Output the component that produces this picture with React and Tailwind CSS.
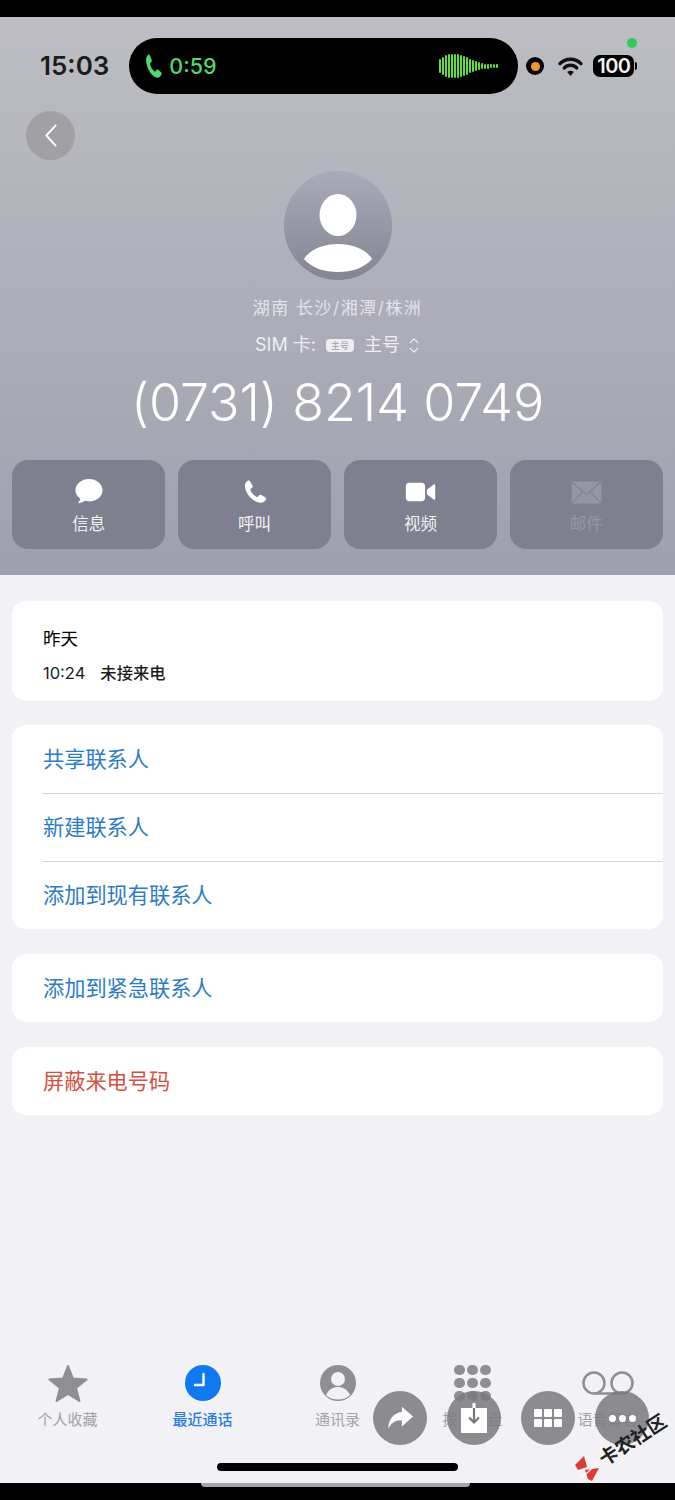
import React from "react";

const font = { fontFamily: '"Inter","Noto Sans CJK SC",sans-serif' };

function Phone({ className = "", fill = "currentColor", stretch }) {
  return (
    <svg viewBox="0 0 24 24" className={className} preserveAspectRatio={stretch ? "none" : undefined}>
      <path fill={fill} d="M5.2 1.6c.9-.5 1.9-.2 2.4.7l2 3.6c.4.8.3 1.6-.4 2.2l-1.3 1.1c-.3.3-.4.6-.2 1 1.2 2.7 3.2 5 5.9 6.3.4.2.7.1 1-.2l1.2-1.2c.6-.6 1.4-.7 2.1-.3l3.5 2.1c.9.5 1.100 1.500.6 2.300-1 1.700-2.800 3-4.800 2.800C9.700 21.300 3.500 14 2.600 6.800c-.2-2.200 1-4.100 2.600-5.200z" />
    </svg>
  );
}

function ActionButton({ label, dim, children }) {
  return (
    <div className="flex h-[89px] flex-1 flex-col items-center rounded-[16px] bg-[#7f808f] pt-[16px]">
      <div className={`flex h-[32px] items-center justify-center ${dim ? "text-[#9496a6]" : "text-white"}`}>{children}</div>
      <div className={`mt-[4px] text-[16.500px] leading-[24px] ${dim ? "text-[#9496a6]" : "text-[#f1f1f4]"}`}>{label}</div>
    </div>
  );
}

function Row({ children, color = "text-[#2a7cc8]", divider, short, flush }) {
  return (
    <div className="pl-[31px]">
      <div className={`flex ${short ? "h-[67px]" : "h-[68px]"} items-center ${flush ? "" : "pt-[2px]"} text-[21.200px] ${color} ${divider ? "border-b border-[#d4d4d8]" : ""}`}>{children}</div>
    </div>
  );
}

function Card({ children, className = "" }) {
  return <div className={`rounded-[14px] bg-white ${className}`}>{children}</div>;
}

function Tab({ label, active, children }) {
  return (
    <div className="flex w-[135px] flex-col items-center">
      <div className="flex h-[38px] items-center justify-center">{children}</div>
      <div className={`mt-[6px] text-[15px] leading-[24px] ${active ? "font-medium text-[#2b7de0]" : "text-[#a3a3a8]"}`}>{label}</div>
    </div>
  );
}

function Wave() {
  const bars = [14, 18, 22, 24, 24, 24, 24, 22, 20, 18, 14, 12, 10, 8, 6, 5, 5, 4, 4, 4];
  return (
    <div className="flex items-center gap-[1px]">
      {bars.map((h, i) => (
        <div key={i} className="w-[2px] rounded-full bg-[#5fe13a]" style={{ height: h }} />
      ))}
    </div>
  );
}

function FloatCircle({ children }) {
  return <div className="flex h-[54px] w-[54px] items-center justify-center rounded-full bg-[#7a7a7e]/85">{children}</div>;
}

export default function App() {
  return (
    <div className="relative flex h-[1500px] w-[675px] flex-col overflow-hidden bg-black" style={font}>
      <div className="h-[17px] shrink-0 bg-black" />

      <div className="h-[558px] shrink-0 bg-gradient-to-b from-[#bdbdc3] to-[#9ea0ae] px-[12px]">
        <div className="relative flex h-[94px] items-start">
          <div className="ml-[28px] mt-[33px] text-[26px] font-semibold leading-[32px] text-[#1c1c1e]">15:03</div>
          <div className="ml-[20px] mt-[21px] flex h-[56px] w-[389px] items-center rounded-[28px] bg-black pl-[15px] pr-[20px]">
            <Phone className="h-[27px] w-[19px]" fill="#4fd96a" stretch />
            <span className="ml-[6px] text-[21.500px] font-medium text-[#4fd96a]">0:59</span>
            <div className="ml-auto"><Wave /></div>
          </div>
          <div className="ml-[8px] mt-[40px] flex h-[18px] w-[18px] items-center justify-center rounded-full bg-black">
            <div className="h-[9px] w-[9px] rounded-full bg-[#f0962b]" />
          </div>
          <svg viewBox="0 0 28 22" className="ml-[13px] mt-[39px] h-[21px] w-[27px]">
            <path d="M3 8a15.500 15.500 0 0 1 22 0M7.500 12.500a9 9 0 0 1 13 0" fill="none" stroke="#111" strokeWidth="3.600" strokeLinecap="round" />
            <path d="M14 21l-3.500-4.200a5 5 0 0 1 7 0z" fill="#111" />
          </svg>
          <div className="ml-[9px] mt-[38px] flex h-[22px] w-[41px] items-center justify-center rounded-[7px] bg-black text-[20px] font-semibold tracking-[-0.500px] text-[#f2f2f2]">100</div>
          <div className="ml-[1px] mt-[45px] h-[8px] w-[2px] rounded-r-full bg-black" />
          <div className="absolute left-[615px] top-[21px] h-[10px] w-[10px] rounded-full bg-[#34c759]" />
        </div>

        <div className="ml-[14px] flex h-[49px] w-[49px] items-center justify-center rounded-full bg-[#a0a0a5]">
          <svg viewBox="0 0 20 32" className="h-[25px] w-[16px]">
            <path d="M16 3L4 16l12 13" fill="none" stroke="#fff" strokeWidth="2.400" strokeLinecap="round" strokeLinejoin="round" />
          </svg>
        </div>

        <div className="mt-[11px] flex justify-center">
          <div className="relative h-[109px] w-[108px] overflow-hidden rounded-full bg-gradient-to-b from-[#a9abb9] to-[#838592]">
            <svg viewBox="0 0 108 109" className="h-full w-full">
              <ellipse cx="54" cy="44" rx="18.500" ry="21" fill="#fff" />
              <path d="M20 88c6-10 20-15 34-15s28 5 34 15c-8 9-20 13-34 13s-26-4-34-13z" fill="#fff" />
            </svg>
          </div>
        </div>

        <div className="mt-[15px] text-center text-[17px] leading-[26px] tracking-[1.500px] text-[#e2e3e8]">湖南 长沙/湘潭/株洲</div>
        <div className="mt-[11px] flex items-center justify-center text-[18px] leading-[26px] text-[#eeeef2]">
          <span>SIM 卡:</span>
          <span className="ml-[10px] flex h-[13px] w-[28px] items-center justify-center rounded-[4px] bg-[#eeeef2] text-[9px] leading-none text-[#9a9ca8]">主号</span>
          <span className="ml-[10px]">主号</span>
          <svg viewBox="0 0 12 20" className="ml-[8px] h-[19px] w-[12px]">
            <path d="M2 7l4-4 4 4M2 13l4 4 4-4" fill="none" stroke="#eeeef2" strokeWidth="1.400" strokeLinecap="round" strokeLinejoin="round" />
          </svg>
        </div>
        <div className="mt-[15px] text-center text-[52px] font-light leading-[60px] tracking-[-0.100px] text-white">(0731) 8214 0749</div>

        <div className="mt-[27px] flex gap-[12.500px]">
          <ActionButton label="信息">
            <svg viewBox="0 0 32 30" className="h-[28px] w-[30px]">
              <path fill="currentColor" d="M16 1C8 1 1.500 6.300 1.500 13c0 3.700 2 7 5.200 9.200-.3 1.700-1.300 3.400-2.700 4.800 3 0 5.600-1.100 7.500-2.500 1.400.3 3 .5 4.500.5 8 0 14.500-5.300 14.500-12S24 1 16 1z" />
            </svg>
          </ActionButton>
          <ActionButton label="呼叫">
            <Phone className="h-[28px] w-[26px]" />
          </ActionButton>
          <ActionButton label="视频">
            <svg viewBox="0 0 34 24" className="h-[22px] w-[33px]">
              <rect x="1" y="2" width="21" height="20" rx="4" fill="currentColor" />
              <path fill="currentColor" d="M24 9.500l7-5.500c1-.7 2-.2 2 1v14c0 1.200-1 1.700-2 1l-7-5.500z" />
            </svg>
          </ActionButton>
          <ActionButton label="邮件" dim>
            <svg viewBox="0 0 32 24" className="h-[23px] w-[31px]">
              <rect x="0.500" y="0.500" width="31" height="23" fill="currentColor" />
              <path d="M1 1l15 13L31 1M1 23l11-12M31 23L20 11" fill="none" stroke="#7f808f" strokeWidth="1.200" />
            </svg>
          </ActionButton>
        </div>
      </div>

      <div className="flex flex-1 flex-col bg-[#f1f1f6] px-[12px] pt-[26px]">
        <Card className="h-[100px] pl-[31px] pt-[25px]">
          <div className="text-[17.500px] leading-[26px] text-black">昨天</div>
          <div className="mt-[8px] flex text-[16.500px] leading-[26px] text-[#1c1c1e]">
            <span>10:24</span>
            <span className="ml-[15px] text-[16.300px] font-medium">未接来电</span>
          </div>
        </Card>

        <Card className="mt-[24px] pt-[1px]">
          <Row divider flush>共享联系人</Row>
          <Row divider flush>新建联系人</Row>
          <Row short flush>添加到现有联系人</Row>
        </Card>
        <Card className="mt-[25px]"><Row>添加到紧急联系人</Row></Card>
        <Card className="mt-[25px]"><Row color="text-[#d5513f]">屏蔽来电号码</Row></Card>

        <div className="mt-auto -mx-[12px] flex">
          <Tab label="个人收藏">
            <svg viewBox="0 0 40 38" className="h-[38px] w-[40px]">
              <path fill="#8e8e93" stroke="#8e8e93" strokeWidth="2" strokeLinejoin="round" d="M20 2l5 12.500 13.500 1-10.500 8.500 3.500 13L20 30l-11.500 7L12 24 1.500 15.500l13.500-1z" />
            </svg>
          </Tab>
          <Tab label="最近通话" active>
            <svg viewBox="0 0 36 36" className="h-[36px] w-[36px]">
              <circle cx="18" cy="18" r="18" fill="#0f7af0" />
              <path d="M18.500 9v11H10" fill="none" stroke="#fff" strokeWidth="2.400" strokeLinecap="round" strokeLinejoin="round" />
            </svg>
          </Tab>
          <Tab label="通讯录">
            <svg viewBox="0 0 36 36" className="h-[36px] w-[36px]">
              <circle cx="18" cy="18" r="18" fill="#8e8e93" />
              <circle cx="18" cy="14" r="7" fill="#f1f1f6" />
              <path d="M6 30c3-6 7-8 12-8s9 2 12 8c-3 3-7 4.500-12 4.500S9 33 6 30z" fill="#f1f1f6" />
            </svg>
          </Tab>
          <Tab label="拨号键盘">
            <div className="grid grid-cols-3 gap-[2.500px]">
              {[0, 1, 2, 3, 4, 5, 6, 7, 8].map((i) => (
                <div key={i} className="h-[10.500px] w-[10.500px] rounded-full bg-[#8e8e93]" />
              ))}
            </div>
          </Tab>
          <Tab label="语音留言">
            <svg viewBox="0 0 54 24" className="h-[24px] w-[54px]">
              <circle cx="13" cy="12" r="10.500" fill="none" stroke="#8e8e93" strokeWidth="2.500" />
              <circle cx="41" cy="12" r="10.500" fill="none" stroke="#8e8e93" strokeWidth="2.500" />
              <path d="M13 22.500h28" stroke="#8e8e93" strokeWidth="2.500" />
            </svg>
          </Tab>
        </div>

        <div className="mt-[22px] flex h-[29px] justify-center">
          <div className="mt-[9px] h-[8px] w-[241px] rounded-full bg-black" />
        </div>
      </div>

      <div className="h-[17px] shrink-0 bg-black" />

      <div className="absolute left-[201px] top-[1483px] h-[4px] w-[269px] rounded-b-[4px] bg-[#a6a6aa]" />

      <div className="absolute left-[373px] top-[1391px] flex gap-[20px]">
        <FloatCircle>
          <svg viewBox="0 0 30 28" className="h-[28px] w-[28px]">
            <path fill="#fff" d="M17 2l12 10.500L17 23v-6.500C10 16 5.500 19 2.500 26 2.500 15 8 8.500 17 7.500z" />
          </svg>
        </FloatCircle>
        <FloatCircle>
          <svg viewBox="0 0 26 30" className="h-[30px] w-[26px]">
            <rect x="0" y="5" width="26" height="25" fill="#fff" />
            <rect x="11.500" y="0" width="3" height="6" fill="#fff" />
            <path d="M13 5v14M8 14.500l5 5 5-5" fill="none" stroke="#77777b" strokeWidth="2.200" />
          </svg>
        </FloatCircle>
        <FloatCircle>
          <div className="grid grid-cols-3 gap-[2px]">
            {[0, 1, 2, 3, 4, 5].map((i) => (
              <div key={i} className="h-[8px] w-[8px] rounded-[1px] bg-white" />
            ))}
          </div>
        </FloatCircle>
        <FloatCircle>
          <div className="flex gap-[3px]">
            {[0, 1, 2].map((i) => (
              <div key={i} className="h-[7px] w-[7px] rounded-full bg-white" />
            ))}
          </div>
        </FloatCircle>
      </div>

      <div className="absolute left-[574px] top-[1455px]">
        <svg viewBox="0 0 26 26" className="h-[26px] w-[26px]">
          <path fill="#e03a36" d="M1 10L10 1l3 11-9 3z" />
          <path fill="#e03a36" d="M11 15l14-2-7 13-4-2z" />
          <path d="M5 22C9 22 20 14 22 5" fill="none" stroke="#fff" strokeWidth="1.200" />
        </svg>
      </div>
      <div className="absolute left-[594px] top-[1428px] -rotate-[33deg] whitespace-nowrap text-[19px] font-bold leading-[22px] text-[#222]" style={{ fontFamily: '"Noto Sans CJK SC",serif' }}>卡农社区</div>
    </div>
  );
}
